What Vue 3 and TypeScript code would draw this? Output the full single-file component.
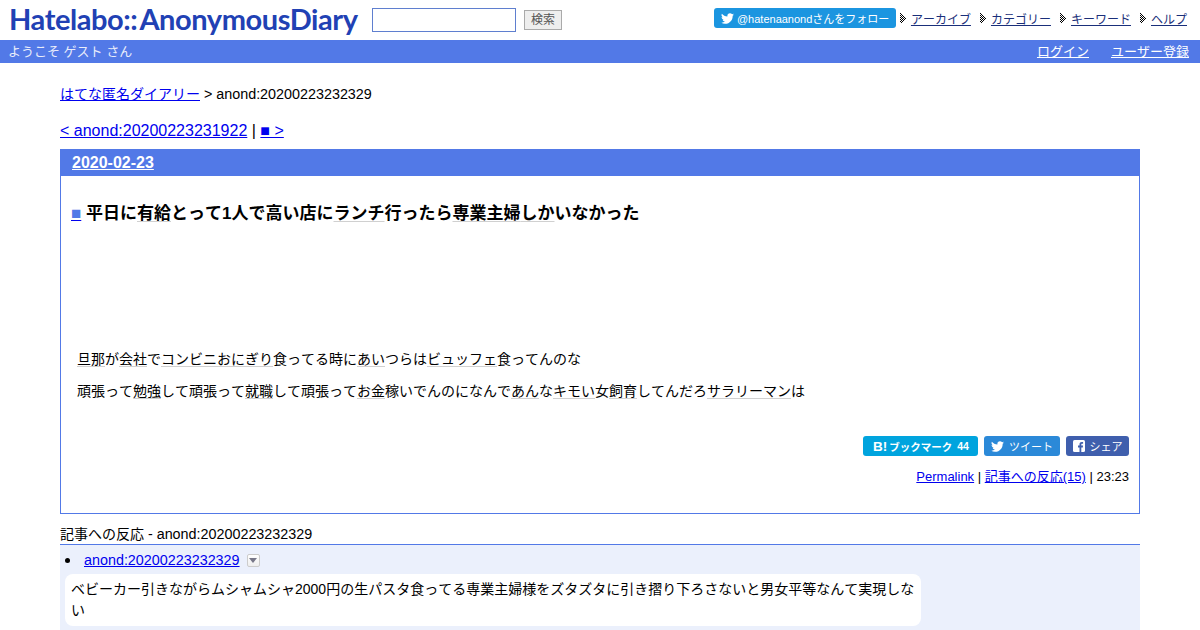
<script setup lang="ts">
const navItems: string[] = ['アーカイブ', 'カテゴリー', 'キーワード', 'ヘルプ']

// Dithered chevron bullet: a checkerboard clipped to a right-pointing triangle.
const chevPath: string = (() => {
  let d = ''
  for (let y = 0; y < 10; y++) {
    const reach = y < 5 ? y + 1 : 10 - y
    for (let x = 0; x < reach + 1 && x < 6; x++) {
      if ((x + y) % 2 === 0) d += `M${x} ${y}h1v1h-1z`
    }
  }
  return d
})()
</script>

<template>
  <div class="page">
    <header class="top">
      <div class="top-left">
        <span class="logo">Hatelabo::<span class="logo-b">AnonymousDiary</span></span>
        <input class="search" type="text" />
        <button class="search-btn" type="button">検索</button>
      </div>
      <div class="top-right">
        <span class="follow">
          <svg class="bird" viewBox="0 0 24 24" width="13" height="13"><path fill="#fff" d="M23.95 4.57a10 10 0 0 1-2.82.77 4.96 4.96 0 0 0 2.16-2.72 9.9 9.9 0 0 1-3.12 1.19 4.92 4.92 0 0 0-8.38 4.48C7.69 8.1 4.07 6.13 1.64 3.16a4.82 4.82 0 0 0-.66 2.48c0 1.71.87 3.21 2.19 4.1a4.9 4.9 0 0 1-2.23-.61v.06a4.92 4.92 0 0 0 3.95 4.83 4.9 4.9 0 0 1-2.21.08 4.94 4.94 0 0 0 4.6 3.42A9.87 9.87 0 0 1 0 19.54a13.9 13.9 0 0 0 7.55 2.21c9.05 0 14-7.5 14-13.98 0-.21 0-.42-.02-.63a9.94 9.94 0 0 0 2.46-2.55z"/></svg>
          @hatenaanondさんをフォロー
        </span>
        <nav class="nav">
          <span v-for="item in navItems" :key="item" class="nav-item">
            <svg class="chev" viewBox="0 0 7 10" width="7" height="10" shape-rendering="crispEdges"><path :d="chevPath" fill="#000"/></svg>
            <a href="#">{{ item }}</a>
          </span>
        </nav>
      </div>
    </header>

    <div class="bar">
      <span>ようこそ ゲスト さん</span>
      <span class="bar-links"><a href="#">ログイン</a><a href="#">ユーザー登録</a></span>
    </div>

    <main class="main">
      <p class="crumb"><a href="#">はてな匿名ダイアリー</a> <span class="lat">&gt; anond:20200223232329</span></p>
      <p class="pager"><a href="#">&lt; anond:20200223231922</a> | <a href="#">■ &gt;</a></p>

      <section class="day">
        <h2 class="date"><a href="#">2020-02-23</a></h2>
        <div class="body">
          <h3 class="title"><a class="mark" href="#">■</a> 平日に<span class="kw">有給</span>とって1人で高い店に<span class="kw">ランチ</span>行ったら<span class="kw">専業主婦</span><span class="kw">しか</span>いなかった</h3>
          <p class="para first"><span class="kw">旦那</span>が<span class="kw">会社</span>で<span class="kw">コンビニ</span><span class="kw">おにぎり</span>食ってる時に<span class="kw">あい</span>つらは<span class="kw">ビュッフェ</span>食ってんのな</p>
          <p class="para">頑張って<span class="kw">勉強</span>して頑張って<span class="kw">就職</span>して頑張って<span class="kw">お金</span>稼いでんのになんで<span class="kw">あん</span>な<span class="kw">キモい</span>女<span class="kw">飼育</span>してんだろ<span class="kw">サラリーマン</span>は</p>

          <div class="shares">
            <span class="share hb"><b class="hb-b">B!</b><b class="hb-t">ブックマーク</b><b class="hb-n">44</b></span>
            <span class="share tw">
              <svg viewBox="0 0 24 24" width="13" height="13"><path fill="#fff" d="M23.95 4.57a10 10 0 0 1-2.82.77 4.96 4.96 0 0 0 2.16-2.72 9.9 9.9 0 0 1-3.12 1.19 4.92 4.92 0 0 0-8.38 4.48C7.69 8.1 4.07 6.13 1.64 3.16a4.82 4.82 0 0 0-.66 2.48c0 1.71.87 3.21 2.19 4.1a4.9 4.9 0 0 1-2.23-.61v.06a4.92 4.92 0 0 0 3.95 4.83 4.9 4.9 0 0 1-2.21.08 4.94 4.94 0 0 0 4.6 3.42A9.87 9.87 0 0 1 0 19.54a13.9 13.9 0 0 0 7.55 2.21c9.05 0 14-7.5 14-13.98 0-.21 0-.42-.02-.63a9.94 9.94 0 0 0 2.46-2.55z"/></svg>
              ツイート
            </span>
            <span class="share fb">
              <svg viewBox="0 0 12 12" width="12" height="12"><rect width="12" height="12" rx="1.5" fill="#fff"/><path fill="#3f5fad" d="M8.3 12V7.4h1.5l.25-1.8H8.3V4.5c0-.5.15-.87.88-.87h.92V2a12 12 0 0 0-1.35-.07c-1.33 0-2.25.82-2.25 2.3v1.37H5v1.8h1.5V12z"/></svg>
              シェア
            </span>
          </div>
          <p class="foot"><a href="#">Permalink</a> | <a href="#">記事への反応(15)</a> | 23:23</p>
        </div>
      </section>

      <h4 class="refs-title">記事への反応 <span class="lat">- anond:20200223232329</span></h4>
      <div class="refs">
        <div class="ref-head">
          <span class="dot"></span>
          <a class="lat" href="#">anond:20200223232329</a>
          <span class="drop"></span>
        </div>
        <div class="bubble">ベビーカー引きながらムシャムシャ2000円の生パスタ食ってる専業主婦様をズタズタに引き摺り下ろさないと男女平等なんて実現しない</div>
      </div>
    </main>
  </div>
</template>

<style>
html, body { margin: 0; background: #fff; overflow: hidden; }
</style>

<style scoped>
.page {
  width: 1200px;
  height: 630px;
  overflow: hidden;
  font-family: "Liberation Sans", "Noto Sans CJK JP", sans-serif;
  font-size: 14px;
  font-kerning: none;
  color: #000;
}
a { color: #0000ee; }
.lat { font-size: 14.35px; }
.top {
  height: 40px;
  display: flex;
  justify-content: space-between;
  align-items: center;
}
.top-left { display: flex; align-items: center; }
.logo {
  margin-left: 9px;
  width: 350px;
  padding-bottom: 2px;
  font-family: "Lato", sans-serif;
  font-weight: 700;
  font-size: 29px;
  font-kerning: normal;
  letter-spacing: -0.42px;
  color: #2141b4;
  white-space: nowrap;
  line-height: 38px;
}
.logo-b { margin-left: 2px; }
.search {
  margin: 0 0 0 13px;
  width: 144px;
  height: 24px;
  padding: 0;
  box-sizing: border-box;
  border: 1px solid #5f7fcf;
  background: #fff;
}
.search-btn {
  margin-left: 8px;
  width: 38px;
  height: 20px;
  padding: 0;
  border: 1px solid #aaa;
  background: #eee;
  color: #555;
  font-family: inherit;
  font-size: 12px;
  line-height: 18px;
}
.top-right { display: flex; align-items: center; padding: 0 13px 4px 0; }
.follow {
  display: flex;
  align-items: center;
  gap: 3px;
  height: 20px;
  width: 182px;
  box-sizing: border-box;
  padding-left: 7px;
  background: #1b95e0;
  border-radius: 3px;
  color: #fff;
  font-size: 11px;
  white-space: nowrap;
}
.nav { display: flex; font-size: 12px; margin-left: 4px; }
.nav-item { display: flex; align-items: center; margin-right: 9px; gap: 4px; }
.nav-item:last-child { margin-right: 0; }
.nav-item a { color: #1a2f7a; }
.chev { flex: none; }
.bar {
  height: 23px;
  box-sizing: border-box;
  background: #5279e7;
  color: #e8ecfa;
  display: flex;
  justify-content: space-between;
  align-items: center;
  padding: 0 11px 2px 8px;
  font-size: 13px;
}
.bar-links { display: flex; gap: 22px; }
.bar-links a { color: #fff; }
.main { padding: 0 60px; }
.crumb { margin: 0; padding-top: 22px; line-height: 18px; }
.pager { margin: 0; padding-top: 18px; font-size: 16px; line-height: 20px; }
.day {
  margin-top: 8px;
  height: 365px;
  box-sizing: border-box;
  border: 1px solid #5279e7;
  border-top: 0;
}
.date {
  margin: 0 -1px;
  height: 27px;
  padding-left: 12px;
  background: #5279e7;
  font-size: 16px;
  line-height: 27px;
}
.date a { color: #fff; }
.body { padding: 0 10px 0 16px; }
.title {
  margin: 0 0 0 -6px;
  padding-top: 26px;
  height: 126px;
  font-size: 17px;
  line-height: 24px;
}
.mark { color: #5279e7; text-decoration-color: #00e; }
.kw {
  text-decoration: underline;
  text-decoration-color: #d0d0d0;
  text-decoration-thickness: 1px;
  text-decoration-skip-ink: none;
  text-underline-offset: 2px;
}
.para { margin: 0; line-height: 22px; }
.para.first { margin-top: 20px; margin-bottom: 10px; }
.shares {
  display: flex;
  justify-content: flex-end;
  gap: 6px;
  margin-top: 34px;
}
.share {
  display: flex;
  align-items: center;
  justify-content: center;
  height: 20px;
  border-radius: 3px;
  color: #fff;
  font-size: 11px;
  gap: 5px;
}
.hb { width: 115px; background: #00a4de; gap: 2px; justify-content: flex-start; padding-left: 10px; box-sizing: border-box; }
.tw { width: 76px; background: #2b89d8; }
.fb { width: 63px; background: #3f5fad; }
.hb-b { font-size: 13.5px; }
.hb-t { font-size: 10.5px; }
.hb-n { margin-left: 3px; font-size: 10.5px; }
.foot { margin: 12px 0 0; text-align: right; font-size: 13px; line-height: 18px; }
.refs-title { margin: 10px 0 0; font-weight: 400; font-size: 14px; line-height: 20px; }
.refs {
  background: #ebf0fc;
  border-top: 1px solid #5279e7;
  padding: 5px 5px 0;
  height: 90px;
}
.ref-head { display: flex; align-items: center; height: 20px; }
.dot { width: 5px; height: 5px; border-radius: 50%; background: #000; margin-right: 14px; }
.drop {
  margin-left: 7px;
  width: 13px;
  height: 13px;
  box-sizing: border-box;
  border: 1px solid #ccc;
  border-radius: 2px;
  background: linear-gradient(#fff, #eee);
  position: relative;
}
.drop::after {
  content: "";
  position: absolute;
  left: 1px;
  top: 3px;
  border: 4.5px solid transparent;
  border-top: 5px solid #778;
  border-bottom: 0;
}
.bubble {
  margin-top: 4px;
  width: 856px;
  box-sizing: border-box;
  background: #fff;
  border-radius: 8px;
  padding: 5px 6px;
  line-height: 21px;
}
</style>
